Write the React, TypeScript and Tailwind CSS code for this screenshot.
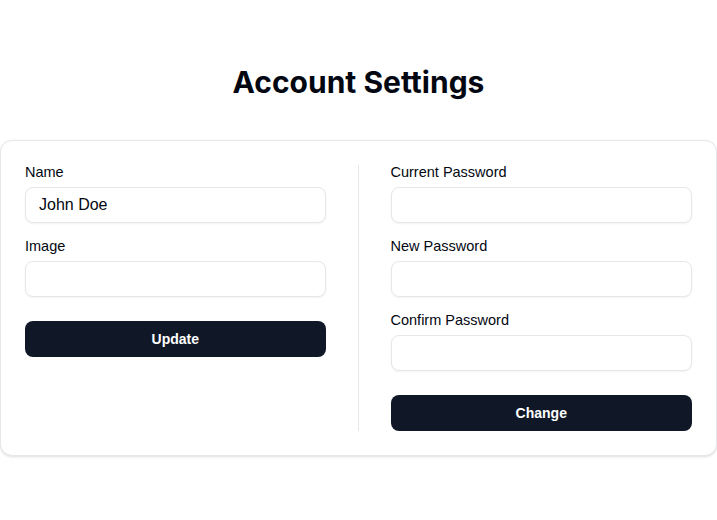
import React from 'react';

function Field({ label, value, type = 'text' }: { label: string; value?: string; type?: string }) {
  return (
    <div className="flex flex-col gap-2">
      <label className="text-[14.5px] font-medium leading-[14px] text-gray-950">{label}</label>
      <input
        type={type}
        defaultValue={value}
        className="h-9 w-full rounded-lg border border-gray-200 bg-white px-[13px] font-['Liberation_Sans',Arial,sans-serif] text-base text-gray-950 shadow-xs outline-none"
      />
    </div>
  );
}

export default function App() {
  return (
    <div className="min-h-screen bg-white pt-16 font-['Liberation_Sans',Arial,sans-serif]">
      <h1 className="mb-10 text-center font-['Inter',sans-serif] text-3xl font-bold leading-9 text-gray-950">
        Account Settings
      </h1>

      <div className="rounded-xl border border-gray-200 bg-white p-6 shadow-sm">
        <div className="grid grid-cols-2">
          {/* Profile */}
          <div className="flex flex-col border-r border-gray-200 pr-8">
            <div className="flex flex-col gap-4">
              <Field label="Name" value="John Doe" />
              <Field label="Image" />
            </div>
            <button className="mt-6 h-9 w-full rounded-lg bg-gray-900 text-sm font-semibold text-white">
              Update
            </button>
          </div>

          {/* Password */}
          <div className="flex flex-col pl-8">
            <div className="flex flex-col gap-4">
              <Field label="Current Password" type="password" />
              <Field label="New Password" type="password" />
              <Field label="Confirm Password" type="password" />
            </div>
            <button className="mt-6 h-9 w-full rounded-lg bg-gray-900 text-sm font-semibold text-white">
              Change
            </button>
          </div>
        </div>
      </div>
    </div>
  );
}
